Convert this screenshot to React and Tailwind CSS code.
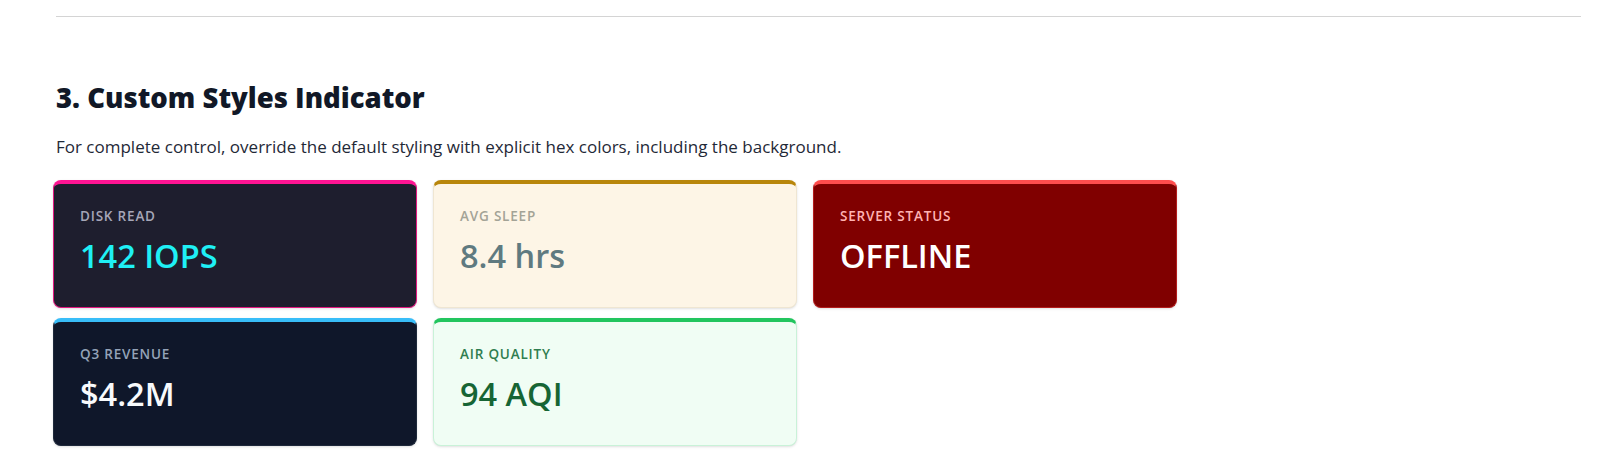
const cards = [
  {
    label: "Disk Read",
    value: "142 IOPS",
    box: "bg-[#1e1e2e] border-[#e0187f] border-t-[#ff1493]",
    labelColor: "text-[#a6a6b8]",
    valueColor: "text-[#1ff0f5]",
  },
  {
    label: "Avg Sleep",
    value: "8.4 hrs",
    box: "bg-[#fdf5e6] border-[#efe6d2] border-t-[#b8860b]",
    labelColor: "text-[#a3a396]",
    valueColor: "text-[#5f7a80]",
  },
  {
    label: "Server Status",
    value: "OFFLINE",
    box: "bg-[#800000] border-[#b31c1c] border-t-[#ff4d4d]",
    labelColor: "text-[#ffb3b3]",
    valueColor: "text-white",
  },
  {
    label: "Q3 Revenue",
    value: "$4.2M",
    box: "bg-[#0f172a] border-[#1e293b] border-t-[#38bdf8]",
    labelColor: "text-[#94a3b8]",
    valueColor: "text-[#f8fafc]",
  },
  {
    label: "Air Quality",
    value: "94 AQI",
    box: "bg-[#f0fdf4] border-[#c9f2d8] border-t-[#22c55e]",
    labelColor: "text-[#2f7d4f]",
    valueColor: "text-[#166534]",
  },
];

function Indicator({ card }) {
  return (
    <div
      className={`h-[128px] rounded-lg border border-t-4 px-[26px] pt-[22px] shadow-sm ${card.box}`}
    >
      <div
        className={`text-[13.5px] font-semibold uppercase tracking-[0.06em] leading-5 ${card.labelColor}`}
      >
        {card.label}
      </div>
      <div
        className={`mt-[8px] text-[32.5px] font-semibold leading-[44px] ${card.valueColor}`}
      >
        {card.value}
      </div>
    </div>
  );
}

export default function App() {
  return (
    <div
      className="min-h-[460px] bg-white pl-[56px] pr-[24px] pt-[16px]"
      style={{ fontFamily: '"Open Sans", "Noto Sans", sans-serif' }}
    >
      <hr className="border-t border-[#d4d4d4]" />

      <h2 className="mt-[63px] text-[27.5px] font-extrabold leading-9 text-[#111827]">
        3. Custom Styles Indicator
      </h2>
      <p className="mt-[18px] text-[17px] leading-[26px] text-[#1f2937]">
        For complete control, override the default styling with explicit hex
        colors, including the background.
      </p>

      <div className="-ml-[3px] mt-[20px] grid w-[1124px] grid-cols-3 gap-x-4 gap-y-[10px]">
        {cards.map((card) => (
          <Indicator key={card.label} card={card} />
        ))}
      </div>
    </div>
  );
}
